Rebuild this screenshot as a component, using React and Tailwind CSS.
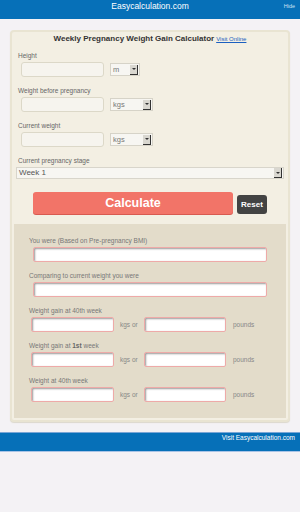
import React from "react";

const FakeSelect = ({ value, width }) => (
  <div
    className={`flex h-[13px] items-center justify-between border border-[#d6d3c8] bg-[#f7f6f2] pl-[2px] pr-[1px] ${width}`}
  >
    <span className="text-[7.5px] leading-none text-[#777]">{value}</span>
    <span className="flex h-[10px] w-[8px] items-center justify-center border-r border-b border-[#333] bg-[#d9d7d0]">
      <span className="h-0 w-0 border-x-[2px] border-t-[2px] border-x-transparent border-t-[#333]" />
    </span>
  </div>
);

const TopInput = () => (
  <div className="h-[15px] w-[83px] rounded-[3px] border border-[#dcd8c8] bg-[#f6f4ee]" />
);

const ResultInput = ({ width }) => (
  <div
    className={`h-[15px] rounded-[2px] border border-[#eeaaa8] bg-white shadow-[inset_1px_1px_2px_#9a9a9a] ${width}`}
  />
);

const TopField = ({ label, unit, unitWidth }) => (
  <div className="mb-[10px]">
    <div className="mb-[2px] ml-[2px] h-[8px] text-[6.5px] leading-[8px] text-[#666]">{label}</div>
    <div className="ml-[5px] flex items-center gap-[6px]">
      <TopInput />
      <FakeSelect value={unit} width={unitWidth} />
    </div>
  </div>
);

const PairRow = ({ label }) => (
  <div className="mb-[10px]">
    <div className="mb-[2px] h-[8px] text-[6.5px] leading-[8px] text-[#777]">{label}</div>
    <div className="ml-[2px] flex items-center">
      <ResultInput width="w-[83px]" />
      <span className="ml-[6px] w-[24px] text-[6.5px] text-[#888]">kgs or</span>
      <ResultInput width="w-[82px]" />
      <span className="ml-[7px] text-[6.5px] text-[#888]">pounds</span>
    </div>
  </div>
);

const App = () => {
  return (
    <div className="min-h-[512px] w-[300px] bg-[#f4f2f5] font-['Liberation_Sans',Arial,sans-serif]">
      {/* header */}
      <div className="relative flex h-[19px] items-start justify-center bg-[#0670b8] pt-[1px]">
        <span className="text-[8.5px] leading-[11px] text-white">Easycalculation.com</span>
        <span className="absolute right-[5px] top-[2px] text-[5.5px] text-[#cfe2f3]">Hide</span>
      </div>

      {/* calculator card */}
      <div className="mx-[10px] mt-[11px] rounded-[4px] border-2 border-[#e9e4d2] bg-[#f3efe3] px-[2px] pb-[2px] shadow-[0_1px_1px_#dcd8cc]">
        <div className="flex h-[12px] items-center justify-center pt-[1px]">
          <span className="text-[8px] font-bold text-[#333]">Weekly Pregnancy Weight Gain Calculator</span>
          <span className="ml-[2px] mt-[1px] text-[6px] text-[#1a5fc0] underline">Visit Online</span>
        </div>

        <div className="mt-[8px] px-[2px]">
          <TopField label="Height" unit="m" unitWidth="w-[30px]" />
          <TopField label="Weight before pregnancy" unit="kgs" unitWidth="w-[43px]" />
          <TopField label="Current weight" unit="kgs" unitWidth="w-[43px]" />

          <div className="mb-[2px] ml-[2px] h-[8px] text-[6.5px] leading-[8px] text-[#666]">
            Current pregnancy stage
          </div>
          <div className="flex h-[12px] w-[268px] items-center justify-between border border-[#d8d5cb] bg-[#f7f6f2] pl-[2px] pr-[1px]">
            <span className="text-[8px] leading-none text-[#555]">Week 1</span>
            <span className="flex h-[10px] w-[8px] items-center justify-center border-r border-b border-[#333] bg-[#d9d7d0]">
              <span className="h-0 w-0 border-x-[2px] border-t-[2px] border-x-transparent border-t-[#333]" />
            </span>
          </div>
        </div>

        <div className="mt-[13px] flex items-end">
          <button className="ml-[19px] flex h-[22px] w-[200px] items-center justify-center rounded-[3px] bg-[#f27468] text-[12.5px] font-bold text-white shadow-[0_1px_0_#d85a50]">
            Calculate
          </button>
          <button className="ml-[4px] flex h-[19px] w-[30px] items-center justify-center rounded-[3px] bg-[#434343] text-[8px] font-bold text-white">
            Reset
          </button>
        </div>

        {/* results */}
        <div className="mt-[10px] bg-[#e3dcca] px-[15px] pb-[6px] pt-[13px]">
          <div className="mb-[10px]">
            <div className="mb-[2px] h-[8px] text-[6.5px] leading-[8px] text-[#777]">
              You were (Based on Pre-pregnancy BMI)
            </div>
            <div className="ml-[4px]">
              <ResultInput width="w-[234px]" />
            </div>
          </div>
          <div className="mb-[10px]">
            <div className="mb-[2px] h-[8px] text-[6.5px] leading-[8px] text-[#777]">
              Comparing to current weight you were
            </div>
            <div className="ml-[4px]">
              <ResultInput width="w-[234px]" />
            </div>
          </div>
          <PairRow label="Weight gain at 40th week" />
          <PairRow
            label={
              <>
                Weight gain at <b className="text-[#666]">1st</b> week
              </>
            }
          />
          <PairRow label="Weight at 40th week" />
        </div>
      </div>

      {/* footer */}
      <div className="mt-[10px] flex h-[20px] justify-end border-y border-t-[#7aa6d6] border-b-[#a9c4e6] bg-[#0670b8] pr-[5px]">
        <span className="text-[6.5px] leading-[10px] text-white">Visit Easycalculation.com</span>
      </div>
    </div>
  );
};

export default App;
